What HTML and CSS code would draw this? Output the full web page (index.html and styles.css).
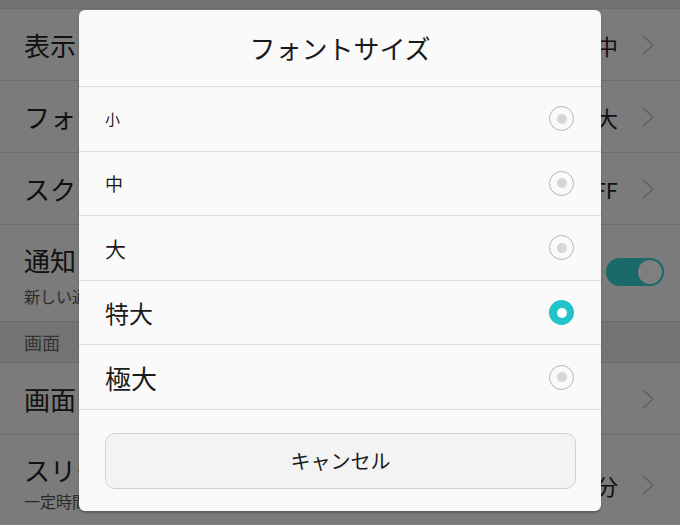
FILE: index.html
```html
<!DOCTYPE html>
<html lang="ja">
<head>
<meta charset="utf-8">
<title>フォントサイズ</title>
<link rel="stylesheet" href="styles.css">
</head>
<body>
<div class="page">
  <div class="statusbar"></div>

  <div class="item">
    <div class="item-text"><div class="item-title">表示モード</div></div>
    <div class="item-value">中</div>
    <svg class="chevron" viewBox="0 0 12 20"><polyline points="1,1 11,10 1,19"/></svg>
  </div>

  <div class="item">
    <div class="item-text"><div class="item-title">フォントサイズ</div></div>
    <div class="item-value">大</div>
    <svg class="chevron" viewBox="0 0 12 20"><polyline points="1,1 11,10 1,19"/></svg>
  </div>

  <div class="item">
    <div class="item-text"><div class="item-title">スクリーンショット</div></div>
    <div class="item-value">OFF</div>
    <svg class="chevron" viewBox="0 0 12 20"><polyline points="1,1 11,10 1,19"/></svg>
  </div>

  <div class="item item-tall">
    <div class="item-text">
      <div class="item-title">通知ランプ</div>
      <div class="item-sub">新しい通知があるとランプが点滅します</div>
    </div>
    <div class="toggle"><div class="knob"></div></div>
  </div>

  <div class="section">画面</div>

  <div class="item">
    <div class="item-text"><div class="item-title">画面モード</div></div>
    <svg class="chevron" viewBox="0 0 12 20"><polyline points="1,1 11,10 1,19"/></svg>
  </div>

  <div class="item item-sleep">
    <div class="item-text">
      <div class="item-title">スリープ</div>
      <div class="item-sub">一定時間操作がないと画面がオフになります</div>
    </div>
    <div class="item-value">10分</div>
    <svg class="chevron" viewBox="0 0 12 20"><polyline points="1,1 11,10 1,19"/></svg>
  </div>
</div>

<div class="scrim"></div>

<div class="dialog">
  <div class="dialog-title">フォントサイズ</div>
  <div class="option"><span class="label size-s">小</span><span class="radio"></span></div>
  <div class="option"><span class="label size-m">中</span><span class="radio"></span></div>
  <div class="option"><span class="label size-l">大</span><span class="radio"></span></div>
  <div class="option"><span class="label size-xl">特大</span><span class="radio checked"></span></div>
  <div class="option"><span class="label size-xxl">極大</span><span class="radio"></span></div>
  <div class="dialog-footer">
    <div class="cancel">キャンセル</div>
  </div>
</div>
</body>
</html>
```

FILE: styles.css
```css
html, body {
  margin: 0;
  padding: 0;
  width: 680px;
  height: 525px;
  overflow: hidden;
  font-family: "Noto Sans CJK JP", "Noto Sans", sans-serif;
  background: #f6f6f6;
  color: #222;
}

.page {
  display: flex;
  flex-direction: column;
  background: #f6f6f6;
}

.statusbar {
  height: 8px;
  background: #e4e4e4;
  border-bottom: 1px solid #d6d6d6;
}

.item {
  display: flex;
  align-items: center;
  height: 72px;
  box-sizing: border-box;
  padding: 0 26px 0 24px;
  border-bottom: 1px solid #d8d8d8;
}

.item-text {
  flex: 1;
  min-width: 0;
  white-space: nowrap;
  overflow: hidden;
}

.item-title {
  font-size: 26px;
  line-height: 32px;
  color: #222;
}

.item-sub {
  font-size: 16px;
  line-height: 22px;
  color: #555;
  margin-top: 9px;
}

.item-tall {
  height: 97px;
}

.item-tall .item-text {
  padding-top: 19px;
  align-self: flex-start;
}

.item-sleep {
  height: 100px;
  border-bottom: none;
}

.item-sleep .item-text {
  align-self: flex-start;
  padding-top: 19px;
}

.item-sleep .item-sub {
  margin-top: 4px;
}

.item-value {
  font-size: 22px;
  line-height: 28px;
  color: #222;
  margin-right: 24px;
}

.chevron {
  width: 12px;
  height: 20px;
  fill: none;
  stroke: #bcbcbc;
  stroke-width: 1.3;
}

.toggle {
  width: 58px;
  height: 28px;
  border-radius: 14px;
  background: #35d2d2;
  display: flex;
  align-items: center;
  justify-content: flex-end;
  padding: 0 2px;
  box-sizing: border-box;
  margin-right: -10px;
  margin-top: -2px;
}

.knob {
  width: 24px;
  height: 24px;
  border-radius: 50%;
  background: #ffffff;
}

.section {
  height: 41px;
  box-sizing: border-box;
  padding-left: 24px;
  display: flex;
  align-items: center;
  font-size: 18px;
  color: #666;
  background: #e6e6e6;
  border-bottom: 1px solid #d8d8d8;
}

.scrim {
  position: absolute;
  inset: 0;
  background: rgba(0, 0, 0, 0.5);
}

.dialog {
  position: absolute;
  left: 79px;
  top: 10px;
  width: 522px;
  height: 501px;
  background: #fafafa;
  border-radius: 6px;
  display: flex;
  flex-direction: column;
  overflow: hidden;
  box-shadow: 0 2px 2px rgba(0, 0, 0, 0.25);
}

.dialog-title {
  height: 77px;
  flex-shrink: 0;
  box-sizing: border-box;
  border-bottom: 1px solid #dcdcdc;
  display: flex;
  align-items: center;
  justify-content: center;
  font-size: 26px;
  color: #1a1a1a;
  padding-bottom: 2px;
}

.option {
  height: 64.6px;
  flex-shrink: 0;
  box-sizing: border-box;
  border-bottom: 1px solid #dcdcdc;
  display: flex;
  align-items: center;
  justify-content: space-between;
  padding: 0 27px 0 26px;
}

.label {
  color: #1a1a1a;
}

.size-s { font-size: 15px; }
.size-m { font-size: 18px; }
.size-l { font-size: 21px; }
.size-xl { font-size: 24px; }
.size-xxl { font-size: 26px; }

.radio {
  width: 25px;
  height: 25px;
  box-sizing: border-box;
  border-radius: 50%;
  border: 1px solid #b4b4b4;
  display: flex;
  align-items: center;
  justify-content: center;
}

.radio::after {
  content: "";
  width: 10px;
  height: 10px;
  border-radius: 50%;
  background: #d6d6d6;
}

.radio.checked {
  border: none;
  background: #22c3c9;
}

.radio.checked::after {
  background: #ffffff;
}

.dialog-footer {
  flex: 1;
  padding: 23px 25px 0 26px;
}

.cancel {
  height: 56px;
  box-sizing: border-box;
  border: 1px solid #d0d0d0;
  border-radius: 10px;
  background: #f3f3f3;
  display: flex;
  align-items: center;
  justify-content: center;
  font-size: 20px;
  color: #1a1a1a;
}
```
